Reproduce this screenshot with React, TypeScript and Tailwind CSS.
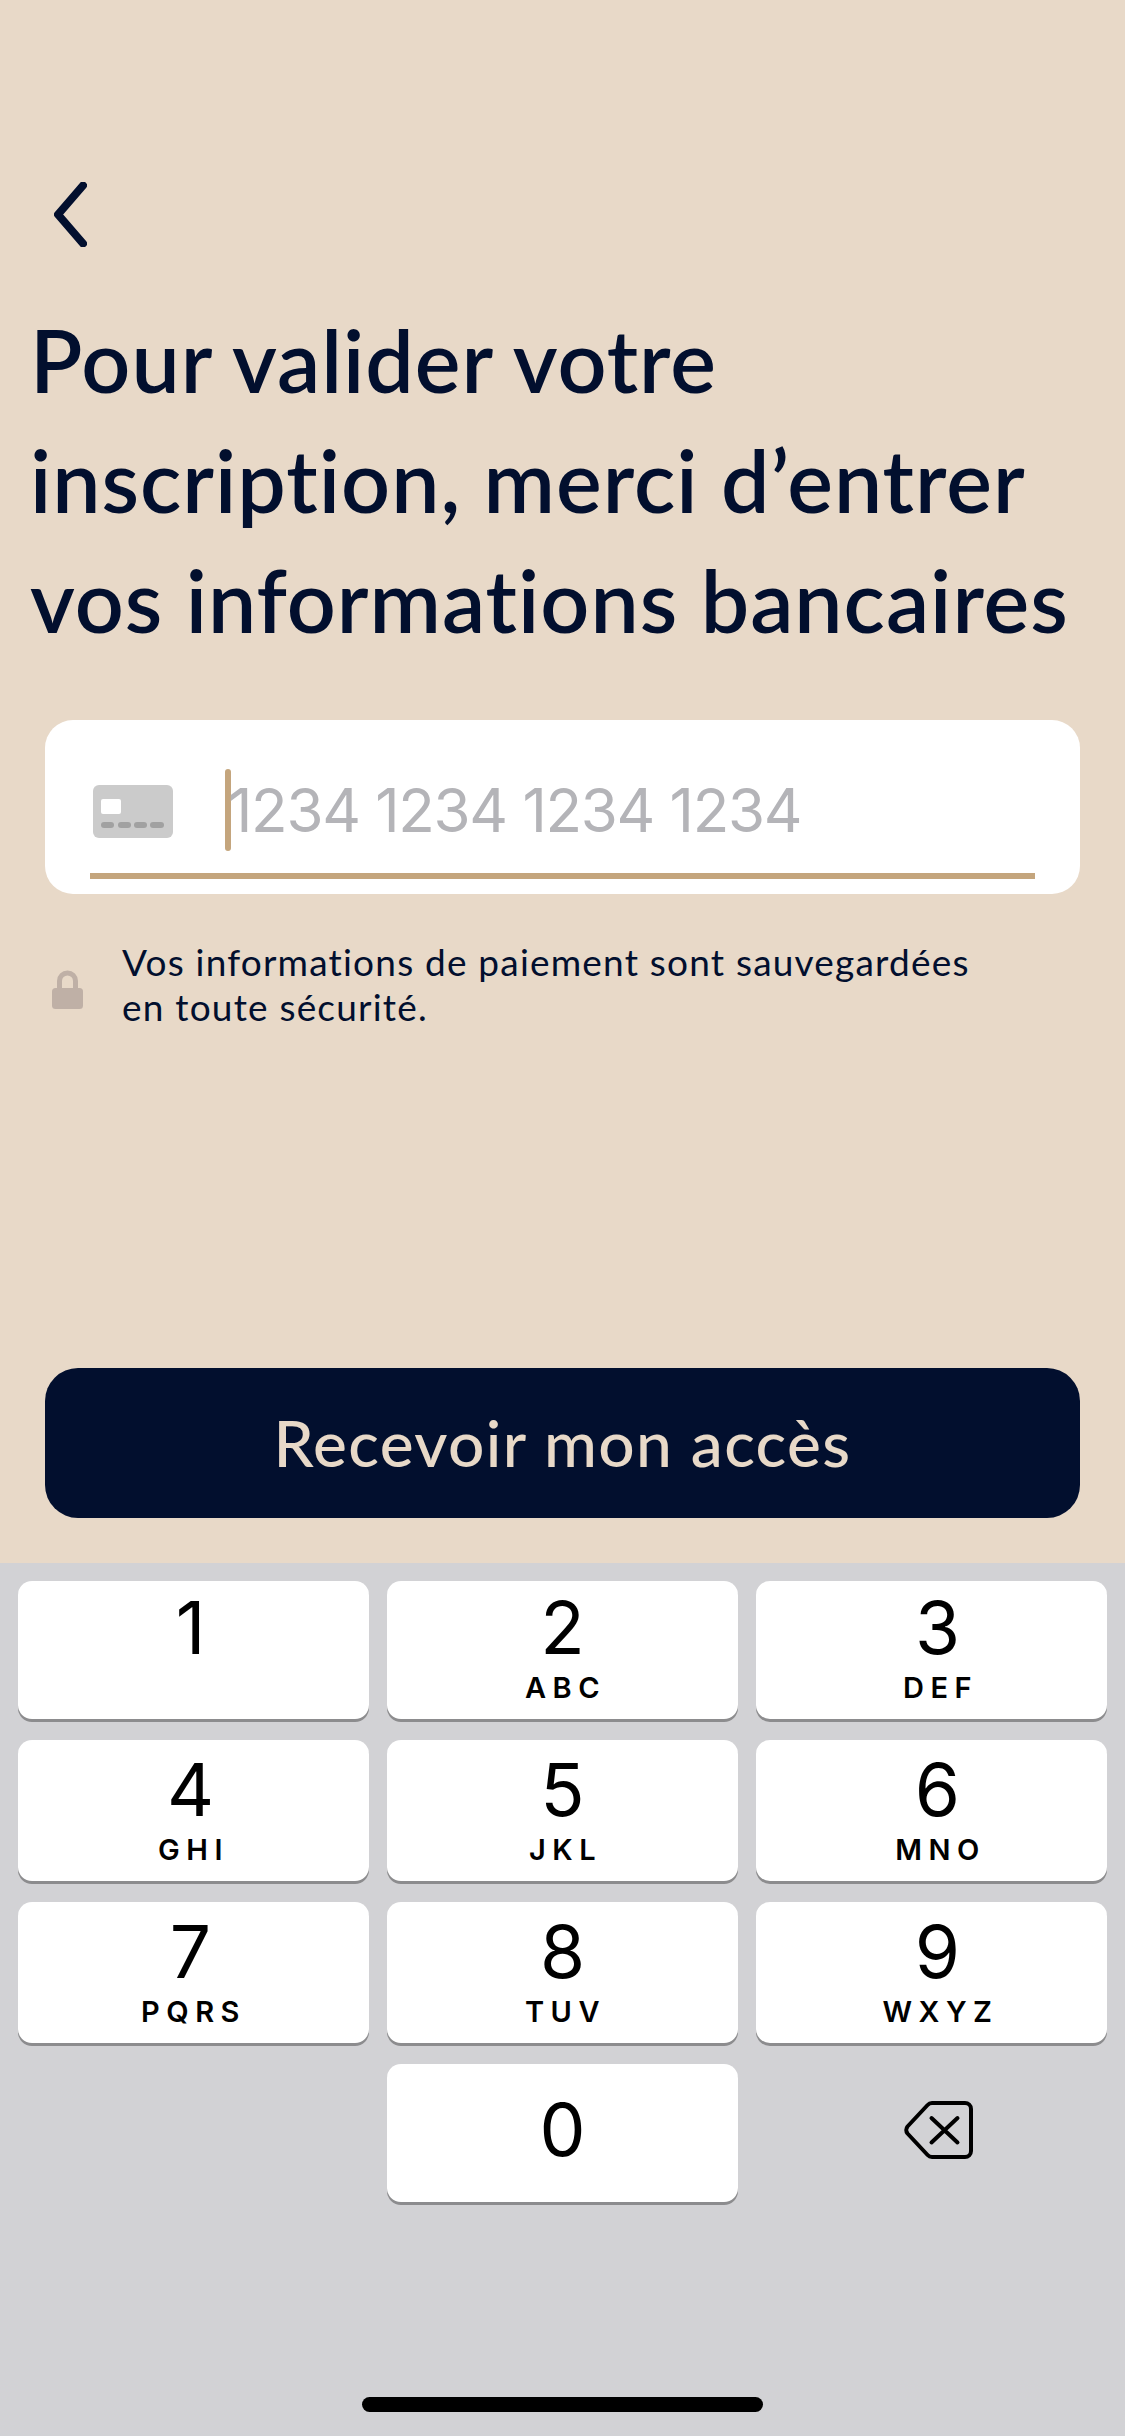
// Écran de saisie de la carte bancaire, avec le pavé numérique iOS en bas.
const KEYS = [
  { digit: '1', letters: '' },
  { digit: '2', letters: 'ABC' },
  { digit: '3', letters: 'DEF' },
  { digit: '4', letters: 'GHI' },
  { digit: '5', letters: 'JKL' },
  { digit: '6', letters: 'MNO' },
  { digit: '7', letters: 'PQRS' },
  { digit: '8', letters: 'TUV' },
  { digit: '9', letters: 'WXYZ' },
];

// Les chiffres du clavier ne sont pas centrés : colonne 1 à gauche, colonne 3 à droite.
const COLUMN_OFFSET = ['pr-[6px]', '', 'pl-[12px]'];

function Key({ digit, letters, index }: { digit: string; letters: string; index: number }) {
  const topPadding = index < 3 ? 'pt-[7px]' : 'pt-[10px]';
  return (
    <div className={`flex flex-col items-center rounded-[14px] bg-white text-black shadow-[0_3px_0_#8c8c8e] font-['Inter',sans-serif] ${topPadding} ${COLUMN_OFFSET[index % 3]}`}>
      <span className="h-[83px] text-[73px] leading-[80px]">{digit}</span>
      <span className="ml-[6px] text-[29px] leading-[34px] font-semibold tracking-[6.500px]">{letters}</span>
    </div>
  );
}

function CardIcon() {
  return (
    <svg width="80" height="53" viewBox="0 0 80 53" className="shrink-0">
      <rect width="80" height="53" rx="6" fill="#cbcbcb" />
      <rect x="8" y="14" width="20" height="15" rx="2" fill="#ffffff" />
      <g fill="#a1a1a1">
        <rect x="8" y="37" width="13" height="6" rx="3" />
        <rect x="25" y="37" width="13" height="6" rx="3" />
        <rect x="41" y="37" width="13" height="6" rx="3" />
        <rect x="57" y="37" width="14" height="6" rx="3" />
      </g>
    </svg>
  );
}

function LockIcon() {
  return (
    <svg width="31" height="39" viewBox="0 0 31 39" className="mt-[10px] shrink-0">
      <path d="M7.500 20V11a8 8 0 0 1 16 0v9" fill="none" stroke="#bfb0a6" strokeWidth="5" />
      <rect y="18" width="31" height="21" rx="3.500" fill="#bfb0a6" />
    </svg>
  );
}

function BackspaceIcon() {
  return (
    <svg width="69" height="58" viewBox="0 0 69 58" fill="none" stroke="#000" strokeWidth="4" strokeLinecap="round" strokeLinejoin="round">
      <path d="M28 2h33a6 6 0 0 1 6 6v42a6 6 0 0 1-6 6H28a6 6 0 0 1-4.400-2L3.500 32.500a5.500 5.500 0 0 1 0-7L23.600 4A6 6 0 0 1 28 2z" />
      <path d="M27.500 17l26 24.500M53.500 17l-26 24.500" />
    </svg>
  );
}

export default function App() {
  return (
    <div className="flex h-[2436px] w-[1125px] flex-col bg-[#e8d9c8] text-[#020f2e]">
      <div className="flex flex-1 flex-col pt-[182px]">
        <svg width="33" height="65" viewBox="0 0 33 65" fill="none" className="ml-[54px]">
          <path d="M29 3.500L4 32.500 29 61.500" stroke="#020f2e" strokeWidth="8" strokeLinecap="round" strokeLinejoin="round" />
        </svg>

        <h1 className="mt-[53px] ml-[30px] text-[86px] leading-[120px] font-semibold tracking-[1px] whitespace-nowrap font-['Lato',sans-serif]">
          Pour valider votre
          <br />
          inscription, merci d’entrer
          <br />
          vos informations bancaires
        </h1>

        <div className="relative mx-[45px] mt-[60px] flex h-[174px] items-start rounded-[28px] bg-white pt-[49px] pl-[48px]">
          <div className="mt-[16px]">
            <CardIcon />
          </div>
          <div className="ml-[52px] h-[82px] w-[6px] rounded-full bg-[#c4a57d]" />
          <span className="ml-[-3px] text-[60px] leading-[82px] tracking-[-1.300px] text-[#b4b4b8] font-['Inter',sans-serif]">1234 1234 1234 1234</span>
          <div className="absolute right-[45px] bottom-[15px] left-[45px] h-[6px] bg-[#c4a57d]" />
        </div>

        <div className="mt-[45px] ml-[52px] flex items-center gap-[39px]">
          <LockIcon />
          <p className="text-[37px] leading-[45px] tracking-[1.200px] font-['Lato',sans-serif]">
            Vos informations de paiement sont sauvegardées
            <br />
            en toute sécurité.
          </p>
        </div>

        <div className="mx-[45px] mt-auto mb-[45px] flex h-[150px] items-center justify-center rounded-[33px] bg-[#020f2e] text-[64px] font-medium tracking-[1.400px] text-[#e8d9c8] font-['Lato',sans-serif]">
          Recevoir mon accès
        </div>
      </div>

      <div className="relative h-[873px] bg-[#d2d2d5] px-[18px] pt-[18px]">
        <div className="grid grid-cols-3 grid-rows-[138px_141px_141px_138px] gap-x-[18px] gap-y-[21px]">
          {KEYS.map((k, index) => (
            <Key key={k.digit} digit={k.digit} letters={k.letters} index={index} />
          ))}
          <div />
          <div className="flex items-center justify-center rounded-[14px] bg-white pb-[6px] text-[73px] text-black shadow-[0_3px_0_#8c8c8e] font-['Inter',sans-serif]">
            0
          </div>
          <div className="flex items-center justify-center pb-[6px] pl-[14px]">
            <BackspaceIcon />
          </div>
        </div>
        <div className="absolute bottom-[24px] left-[362px] h-[15px] w-[401px] rounded-full bg-black" />
      </div>
    </div>
  );
}
